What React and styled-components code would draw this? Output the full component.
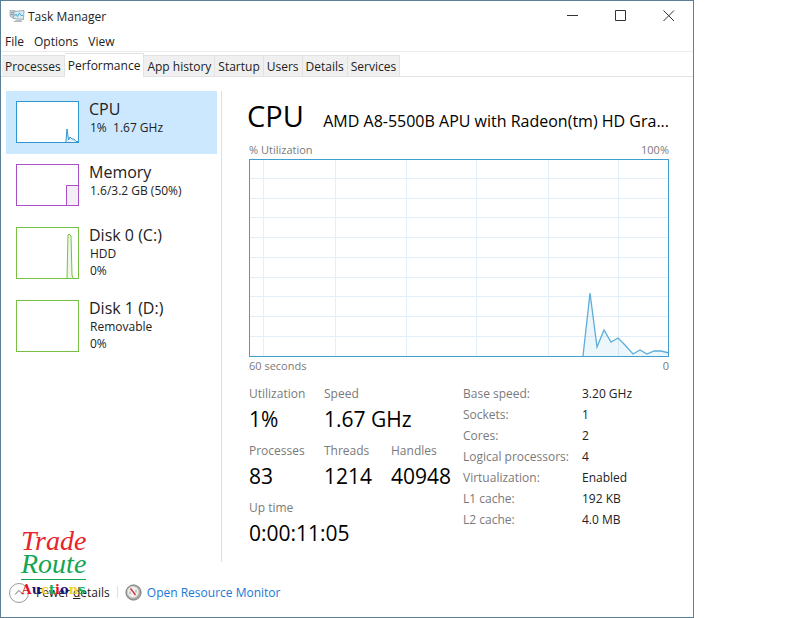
import React from 'react'
import styled, { createGlobalStyle } from 'styled-components'

const tabs = ['Processes', 'Performance', 'App history', 'Startup', 'Users', 'Details', 'Services']

const devices = [
    { name: 'CPU', lines: ['1%  1.67 GHz'], color: '#2f96cf', fill: '#e6f1f9', height: 42, graph: 'M50 41V40L51 28L52.5 39L54 36L56 38L58 38L60 40.5H62V41' },
    { name: 'Memory', lines: ['1.6/3.2 GB (50%)'], color: '#a94fc6', fill: '#f4eef6', height: 42, graph: 'M50.5 41V21.5H62.5' },
    { name: 'Disk 0 (C:)', lines: ['HDD', '0%'], color: '#77c043', fill: '#eff7e9', height: 52, graph: 'M51 51L52 8L53 7L55 9L56 48L57 51' },
    { name: 'Disk 1 (D:)', lines: ['Removable', '0%'], color: '#77c043', fill: '#eff7e9', height: 52, graph: '' },
]

const counters = [
    [['Utilization', '1%'], ['Speed', '1.67 GHz', true]],
    [['Processes', '83'], ['Threads', '1214'], ['Handles', '40948']],
    [['Up time', '0:00:11:05', true]],
]

const specs = [
    ['Base speed:', '3.20 GHz'],
    ['Sockets:', '1'],
    ['Cores:', '2'],
    ['Logical processors:', '4'],
    ['Virtualization:', 'Enabled'],
    ['L1 cache:', '192 KB'],
    ['L2 cache:', '4.0 MB'],
]

const auctions = [
    ['A', '#e8141c'], ['u', '#14147a'], ['c', '#f5d21c'], ['t', '#12b04c'],
    ['i', '#e8141c'], ['o', '#14147a'], ['n', '#f5d21c'], ['s', '#12b04c'],
]

const usage = '334,197 341,134 348,188 355,171 362,183 369,179 376,186 384,195 391,191 398,195 405,192 412,192 420,194'
const columns = [14, 86, 157, 227, 299, 369]
const rows = [20, 40, 59, 79, 99, 119, 138, 158, 178]

const App = () => {
    return (
        <Page>
            <GlobalStyle />
            <Window>
                <TitleBar>
                    <AppIcon />
                    <WindowTitle>Task Manager</WindowTitle>
                    <Caption aria-label="Minimize">
                        <svg width="12" height="12" fill="none" stroke="#333"><path d="M0 5.5H11" /></svg>
                    </Caption>
                    <Caption aria-label="Maximize">
                        <svg width="12" height="12" fill="none" stroke="#333"><path d="M.5 .5H10.5V10.5H.5Z" /></svg>
                    </Caption>
                    <Caption aria-label="Close">
                        <svg width="12" height="12" fill="none" stroke="#333"><path d="M.5 .5L11 11M11 .5L.5 11" /></svg>
                    </Caption>
                </TitleBar>
                <MenuBar>
                    <MenuItem>File</MenuItem>
                    <MenuItem>Options</MenuItem>
                    <MenuItem>View</MenuItem>
                </MenuBar>
                <TabBar role="tablist">
                    {tabs.map((tab) => (
                        <Tab key={tab} role="tab" aria-selected={tab === 'Performance'} $active={tab === 'Performance'}>{tab}</Tab>
                    ))}
                </TabBar>
                <Content>
                    <Sidebar>
                        {devices.map((d, i) => (
                            <Device key={d.name} $active={i === 0}>
                                <Thumb width="63" height={d.height} viewBox={`0 0 63 ${d.height}`} stroke={d.color}>
                                    <rect x=".5" y=".5" width="62" height={d.height - 1} fill="#fff" />
                                    {d.graph && <path d={`${d.graph}V${d.height - 1}`} fill={d.fill} />}
                                </Thumb>
                                <DeviceText>
                                    <DeviceName>{d.name}</DeviceName>
                                    {d.lines.map((line) => <DeviceLine key={line}>{line}</DeviceLine>)}
                                </DeviceText>
                            </Device>
                        ))}
                    </Sidebar>
                    <Details>
                        <Heading>
                            <Title>CPU</Title>
                            <Model>AMD A8-5500B APU with Radeon(tm) HD Gra...</Model>
                        </Heading>
                        <AxisRow><span>% Utilization</span><span>100%</span></AxisRow>
                        <Chart viewBox="0 0 420 198" preserveAspectRatio="none">
                            <g stroke="#e0eff8">
                                {columns.map((x) => <path key={x} d={`M${x + 0.5} 0V198`} />)}
                                {rows.map((y) => <path key={y} d={`M0 ${y - 0.5}H420`} />)}
                            </g>
                            <polygon points={`${usage} 420,198 334,198`} fill="#1f8ac6" fillOpacity=".08" />
                            <polyline points={usage} fill="none" stroke="#5aaeda" strokeWidth="1.3" />
                            <rect x=".5" y=".5" width="419" height="197" fill="none" stroke="#3f9fd0" />
                        </Chart>
                        <AxisRow><span>60 seconds</span><span>0</span></AxisRow>
                        <Stats>
                            <Counters>
                                {counters.map((row) => (
                                    <CounterRow key={row[0][0]}>
                                        {row.map(([label, value, wide]) => (
                                            <Counter key={label} $wide={wide}>
                                                <Label>{label}</Label>
                                                <Value>{value}</Value>
                                            </Counter>
                                        ))}
                                    </CounterRow>
                                ))}
                            </Counters>
                            <Specs>
                                <tbody>
                                    {specs.map(([label, value]) => (
                                        <tr key={label}><th scope="row">{label}</th><td>{value}</td></tr>
                                    ))}
                                </tbody>
                            </Specs>
                        </Stats>
                    </Details>
                </Content>
                <Footer>
                    <FewerButton>
                        <svg width="20" height="20" fill="none" stroke="#999">
                            <circle cx="10" cy="10" r="9.5" />
                            <path d="M6 11.5L10 7.5L14 11.5" stroke="#666" />
                        </svg>
                        <span>Fewer <u>d</u>etails</span>
                    </FewerButton>
                    <Divider />
                    <MonitorLink href="#resource-monitor">
                        <GaugeIcon />
                        Open Resource Monitor
                    </MonitorLink>
                    <Watermark>
                        <Script $color="#e8242c">Trade</Script>
                        <Script $color="#12a552">Route</Script>
                        <Auctions>
                            {auctions.map(([letter, color]) => <Letter key={letter} $color={color}>{letter}</Letter>)}
                        </Auctions>
                    </Watermark>
                </Footer>
            </Window>
        </Page>
    )
}

const AppIcon = () => (
    <svg width="16" height="16" viewBox="0 0 16 16" fill="none">
        <path d="M1 2.5H6V10H3L1 8Z" fill="#c3cbd0" stroke="#9aa5ab" strokeWidth=".7" />
        <path d="M2 4.5H5M2 6.5H5" stroke="#7b8890" strokeWidth=".7" />
        <path d="M5 3.5L15 2.5L14.5 11.5L4.5 10.5Z" fill="#d5ecf5" stroke="#9babb4" />
        <path d="M5.5 8L7 6L8.5 8.5L10.5 5L12 7.5H14" stroke="#4aa9cd" />
        <path d="M7 12H12L13.5 14H4Z" fill="#b3bcc1" />
    </svg>
)

const GaugeIcon = () => (
    <svg width="17" height="17" viewBox="0 0 17 17" fill="none">
        <circle cx="8.5" cy="8.5" r="7.6" fill="#a9a7a5" stroke="#7d7b7a" />
        <circle cx="8" cy="8" r="5.6" fill="#f1eeee" stroke="#d4d2d0" />
        <path d="M5 10V7.5M11 8.5V6" stroke="#999" />
        <path d="M5.5 4.5L10.5 11" stroke="#c8383c" strokeWidth="1.4" />
    </svg>
)

export default App

const GlobalStyle = createGlobalStyle`
    * {
        box-sizing: border-box;
    }
    body {
        margin: 0;
        background: #fff;
        color: #222;
        font-family: 'Open Sans', 'Noto Sans', sans-serif;
        font-size: 12px;
        line-height: 16px;
    }
    button {
        font: inherit;
        color: inherit;
        background: none;
        border: 0;
        padding: 0;
    }
`
const Page = styled.div`
    display: flex;
    min-height: 100vh;
    padding-right: 106px;
`
const Window = styled.main`
    flex: 1;
    display: flex;
    flex-direction: column;
    border: 1px solid #5b7f95;
`
const TitleBar = styled.header`
    display: flex;
    align-items: center;
    height: 30px;
    padding-left: 8px;
`
const WindowTitle = styled.span`
    flex: 1;
    padding: 2px 0 0 3px;
`
const Caption = styled.button`
    display: flex;
    align-items: center;
    justify-content: center;
    width: 48px;
    height: 30px;
`
const MenuBar = styled.nav`
    display: flex;
    gap: 10px;
    height: 21px;
    padding: 0 4px;
    border-bottom: 1px solid #ececec;
`
const MenuItem = styled.button`
    height: 20px;
    padding-top: 2px;
`
const TabBar = styled.div`
    display: flex;
    align-items: flex-end;
    height: 25px;
    padding-left: 1px;
    border-bottom: 1px solid #e2e2e2;
`
const Tab = styled.button`
    height: ${(p) => (p.$active ? '24px' : '21px')};
    padding: 2px 3px 0;
    padding-top: ${(p) => (p.$active ? '0' : '2px')};
    margin-bottom: ${(p) => (p.$active ? '-1px' : '0')};
    background: ${(p) => (p.$active ? '#fff' : '#f0f0f0')};
    border: 1px solid #e2e2e2;
    border-width: 1px 1px 0 0;
`
const Content = styled.div`
    flex: 1;
    display: flex;
    padding: 14px 24px 0 5px;
`
const Sidebar = styled.div`
    width: 216px;
    margin-right: 27px;
    border-right: 1px solid #dedede;
    padding-right: 4px;
`
const Device = styled.button`
    display: flex;
    width: 100%;
    padding: 8px 10px 11px;
    text-align: left;
    background: ${(p) => (p.$active ? '#cce8ff' : 'transparent')};
`
const Thumb = styled.svg`
    flex: none;
    margin: 2px 10px 0 0;
`
const DeviceText = styled.span`
    display: flex;
    flex-direction: column;
    height: 44px;
`
const DeviceName = styled.span`
    font-size: 16px;
    line-height: 20px;
`
const DeviceLine = styled.span`
    flex: none;
    line-height: 17px;
    padding-left: 1px;
    white-space: pre;
`
const Details = styled.section`
    flex: 1;
    min-width: 0;
`
const Heading = styled.div`
    display: flex;
    align-items: baseline;
    justify-content: space-between;
    height: 50px;
    color: #000;
    white-space: nowrap;
`
const Title = styled.h1`
    margin: 0 0 0 -2px;
    font-size: 29px;
    font-weight: 400;
    line-height: 50px;
`
const Model = styled.span`
    font-size: 16px;
`
const AxisRow = styled.div`
    display: flex;
    justify-content: space-between;
    height: 18px;
    font-size: 11px;
    color: #7a7a7a;
    line-height: 18px;
`
const Chart = styled.svg`
    display: block;
    width: 100%;
    height: 198px;
`
const Stats = styled.div`
    display: flex;
    padding-top: 8px;
`
const Counters = styled.div`
    width: 214px;
`
const CounterRow = styled.div`
    display: grid;
    grid-template-columns: 75px 67px 1fr;
    height: 57px;
`
const Counter = styled.div`
    grid-column: ${(p) => (p.$wide ? 'span 2' : 'auto')};
    white-space: nowrap;
`
const Label = styled.div`
    line-height: 21px;
    color: #7a7a7a;
`
const Value = styled.div`
    font-size: 21px;
    line-height: 30px;
    color: #000;
`
const Specs = styled.table`
    border-collapse: collapse;
    align-self: flex-start;
    white-space: nowrap;

    th, td {
        height: 21px;
        padding: 0;
        text-align: left;
        font-weight: 400;
    }
    th {
        width: 119px;
        color: #7a7a7a;
    }
`
const Footer = styled.footer`
    position: relative;
    display: flex;
    align-items: center;
    height: 50px;
    margin-top: 5px;
    padding-left: 8px;
`
const FewerButton = styled.button`
    display: flex;
    align-items: center;
    gap: 7px;
    padding-top: 1px;
`
const Divider = styled.span`
    width: 1px;
    height: 12px;
    margin: 0 7px;
    background: #ddd;
`
const MonitorLink = styled.a`
    display: flex;
    align-items: center;
    gap: 5px;
    padding-top: 1px;
    color: #1a78d6;
    text-decoration: none;
`
const Watermark = styled.div`
    position: absolute;
    left: 20px;
    bottom: 17px;
    width: 65px;
    text-align: center;
    pointer-events: none;
`
const Script = styled.div`
    font-family: 'Liberation Serif', serif;
    font-style: italic;
    font-size: 28px;
    line-height: 23px;
    color: ${(p) => p.$color};
`
const Auctions = styled.div`
    display: flex;
    justify-content: center;
    margin-top: 4px;
    border-top: 1px solid #12a552;
    font-family: 'DejaVu Serif', serif;
    font-size: 13px;
    font-weight: 700;
    line-height: 20px;
`
const Letter = styled.span`
    color: ${(p) => p.$color};
`
